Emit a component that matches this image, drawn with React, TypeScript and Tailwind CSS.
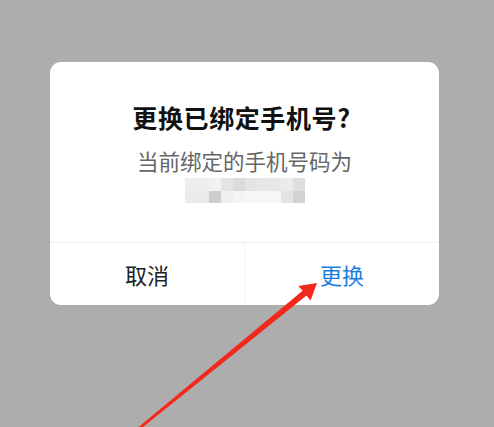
import React from "react"

const cjk = { fontFamily: '"Noto Sans CJK SC", "Noto Sans", sans-serif' }

// pixelated (mosaic) phone number, two rows of blocks
const mosaicRows = [
  ["#ededed", "#ededed", "#f1f1f1", "#e4e4e4", "#dcdcdc", "#e4e4e4", "#e7e7e7", "#e7e7e7", "#ececec", "#dfdfdf"],
  ["#ebebeb", "#ebebeb", "#cdcdcd", "#efefef", "#f4f4f4", "#f7f7f7", "#f7f7f7", "#f6f6f6", "#e4e4e4", "#d3d3d3"],
]

function Mosaic() {
  return (
    <div className="flex flex-col w-[120px] mx-auto">
      {mosaicRows.map((row, i) => (
        <div key={i} className="flex h-[12.5px]">
          {row.map((c, j) => (
            <div key={j} className="w-[12px] h-full" style={{ backgroundColor: c }} />
          ))}
        </div>
      ))}
    </div>
  )
}

function Arrow() {
  return (
    <svg className="absolute inset-0 pointer-events-none" width="494" height="427" viewBox="0 0 494 427">
      <polygon
        points="317,283 310.5,300.5 306.5,295.4 137.8,431.2 136.2,429 302.6,290.8 298.4,286"
        fill="#f2281c"
      />
    </svg>
  )
}

export default function App() {
  return (
    <div className="relative w-[494px] h-[427px] bg-[#adadad] overflow-hidden" style={cjk}>
      <div className="pt-[62px] pl-[50px]">
        <div className="w-[389px] h-[243px] bg-white rounded-[11px] flex flex-col">
          <div className="pt-[39px] flex flex-col items-center">
            <h1 className="text-[25px] leading-[32px] tracking-[0.6px] font-bold text-[#111111] -ml-[6px]">更换已绑定手机号?</h1>
            <p className="mt-[14px] text-[21.5px] leading-[28px] text-[#666666]">当前绑定的手机号码为</p>
            <div className="mt-[3px] w-full">
              <Mosaic />
            </div>
          </div>
          <div className="mt-auto h-[63px] border-t border-[#efefef] flex">
            <button className="flex-1 flex items-center justify-center text-[22px] text-[#222222] border-r border-[#f2f2f2]">
              取消
            </button>
            <button className="flex-1 flex items-center justify-center text-[22px] text-[#1a7ee0]">
              更换
            </button>
          </div>
        </div>
      </div>
      <Arrow />
    </div>
  )
}
